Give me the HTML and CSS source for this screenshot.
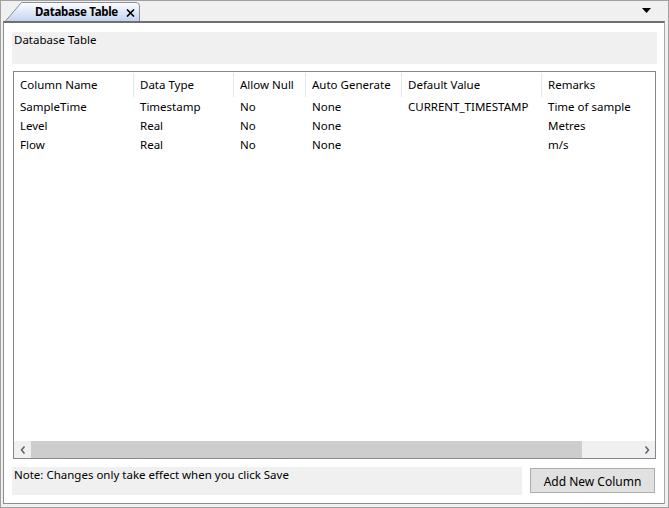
FILE: index.html
```html
<!DOCTYPE html>
<html lang="en">
<head>
    <meta charset="UTF-8">
    <title>Database Table</title>
    <link rel="stylesheet" href="styles.css">
</head>
<body>

<div class="window">
    <!-- tab strip -->
    <div class="tabstrip">
        <div class="tab">
            <svg class="tab-shape" width="136" height="20" viewBox="0 0 136 20">
                <defs>
                    <linearGradient id="tabfill" x1="0" y1="0" x2="0" y2="1">
                        <stop offset="0" stop-color="#fdfeff"/>
                        <stop offset="1" stop-color="#c3d4ef"/>
                    </linearGradient>
                </defs>
                <path d="M0.5 20 L16.5 1.5 L131 1.5 Q134.5 1.5 134.5 5 L134.5 20" fill="url(#tabfill)" stroke="#8b8f97"/>
            </svg>
            <span class="tab-label">Database Table</span>
            <svg class="tab-close" width="9" height="8" viewBox="0 0 9 8">
                <path d="M1 0.5 L8 7.5 M8 0.5 L1 7.5" stroke="#000" stroke-width="1.6"/>
            </svg>
        </div>
        <svg class="tab-menu" width="9" height="5" viewBox="0 0 9 5">
            <path d="M0 0 L9 0 L4.5 5 Z" fill="#000"/>
        </svg>
    </div>

    <div class="panel">
        <div class="title-box">Database Table</div>

        <div class="grid-box">
            <div class="grid">
                <div class="cell head">Column Name</div>
                <div class="cell head">Data Type</div>
                <div class="cell head">Allow Null</div>
                <div class="cell head">Auto Generate</div>
                <div class="cell head">Default Value</div>
                <div class="cell head last">Remarks</div>

                <div class="cell">SampleTime</div>
                <div class="cell">Timestamp</div>
                <div class="cell">No</div>
                <div class="cell">None</div>
                <div class="cell">CURRENT_TIMESTAMP</div>
                <div class="cell">Time of sample</div>

                <div class="cell">Level</div>
                <div class="cell">Real</div>
                <div class="cell">No</div>
                <div class="cell">None</div>
                <div class="cell"></div>
                <div class="cell">Metres</div>

                <div class="cell">Flow</div>
                <div class="cell">Real</div>
                <div class="cell">No</div>
                <div class="cell">None</div>
                <div class="cell"></div>
                <div class="cell">m/s</div>
            </div>

            <!-- horizontal scrollbar -->
            <div class="hscroll">
                <div class="arrow">
                    <svg width="6" height="8" viewBox="0 0 6 8"><path d="M4.5 0.5 L1.5 4 L4.5 7.5" fill="none" stroke="#606060" stroke-width="1.5"/></svg>
                </div>
                <div class="track"><div class="thumb"></div></div>
                <div class="arrow">
                    <svg width="6" height="8" viewBox="0 0 6 8"><path d="M1.5 0.5 L4.5 4 L1.5 7.5" fill="none" stroke="#606060" stroke-width="1.5"/></svg>
                </div>
            </div>
        </div>

        <div class="footer">
            <div class="note">Note: Changes only take effect when you click Save</div>
            <button class="btn">Add New Column</button>
        </div>
    </div>
</div>

</body>
</html>
```

FILE: styles.css
```css
body {
    margin: 0;
    padding: 0;
    font-family: "Segoe UI", "Noto Sans", Arial, sans-serif;
    font-size: 11.5px;
    color: #000;
    background-color: #f0f0f0;
}
.window {
    width: 669px;
    height: 508px;
    box-sizing: border-box;
    border: 1px solid #a0a0a0;
    background-color: #f0f0f0;
    display: flex;
    flex-direction: column;
}
.tabstrip {
    height: 20px;
    display: flex;
    align-items: flex-end;
    padding-left: 4px;
    padding-right: 17px;
}
.tab {
    position: relative;
    width: 136px;
    height: 20px;
    display: flex;
    align-items: center;
    flex-shrink: 0;
}
.tab-shape {
    position: absolute;
    left: 0;
    top: 0;
}
.tab-label {
    position: relative;
    margin-left: 30px;
    margin-top: 1px;
    font-weight: bold;
    letter-spacing: -0.3px;
    white-space: nowrap;
}
.tab-close {
    position: relative;
    flex-shrink: 0;
    margin-left: auto;
    margin-right: 6px;
    margin-top: 3px;
}
.tab-menu {
    margin-left: auto;
    margin-bottom: 8px;
}
.panel {
    flex: 1;
    min-height: 0;
    margin: 0 3px 3px 2px;
    border: 1px solid #8c8c8c;
    border-top: 2px solid #6f6f6f;
    border-right-color: #a9a9a9;
    background-color: #fff;
    padding: 9px 7px 8px 8px;
    display: flex;
    flex-direction: column;
}
.title-box {
    height: 32px;
    box-sizing: border-box;
    background-color: #f0f0f0;
    padding: 0 2px;
}
.grid-box {
    flex: 1;
    min-height: 0;
    margin: 7px 1px 8px 1px;
    border: 1px solid #828790;
    display: flex;
    flex-direction: column;
    overflow: hidden;
}
.grid {
    flex: 1;
    display: grid;
    grid-template-columns: 120px 100px 72px 96px 140px 1fr;
    grid-template-rows: 24px;
    grid-auto-rows: 19px;
    align-content: start;
    padding-top: 1px;
}
.cell {
    padding-left: 6px;
    line-height: 19px;
    white-space: nowrap;
    overflow: hidden;
}
.head {
    height: 24px;
    line-height: 24px;
    border-right: 1px solid #e5e5e5;
    box-sizing: border-box;
}
.head.last {
    border-right: none;
}
.hscroll {
    height: 17px;
    display: flex;
    background-color: #f0f0f0;
}
.arrow {
    width: 17px;
    display: flex;
    align-items: center;
    justify-content: center;
}
.track {
    flex: 1;
    display: flex;
}
.thumb {
    width: 551px;
    background-color: #cdcdcd;
}
.footer {
    height: 28px;
    display: flex;
    align-items: flex-start;
}
.note {
    width: 510px;
    height: 28px;
    box-sizing: border-box;
    background-color: #f0f0f0;
    padding: 0 2px;
}
.btn {
    margin-left: auto;
    margin-right: 2px;
    margin-top: 1px;
    width: 125px;
    height: 25px;
    padding: 1px 0 0;
    font-family: inherit;
    font-size: 12px;
    color: #000;
    background-color: #e1e1e1;
    border: 1px solid #adadad;
    cursor: pointer;
}
```
